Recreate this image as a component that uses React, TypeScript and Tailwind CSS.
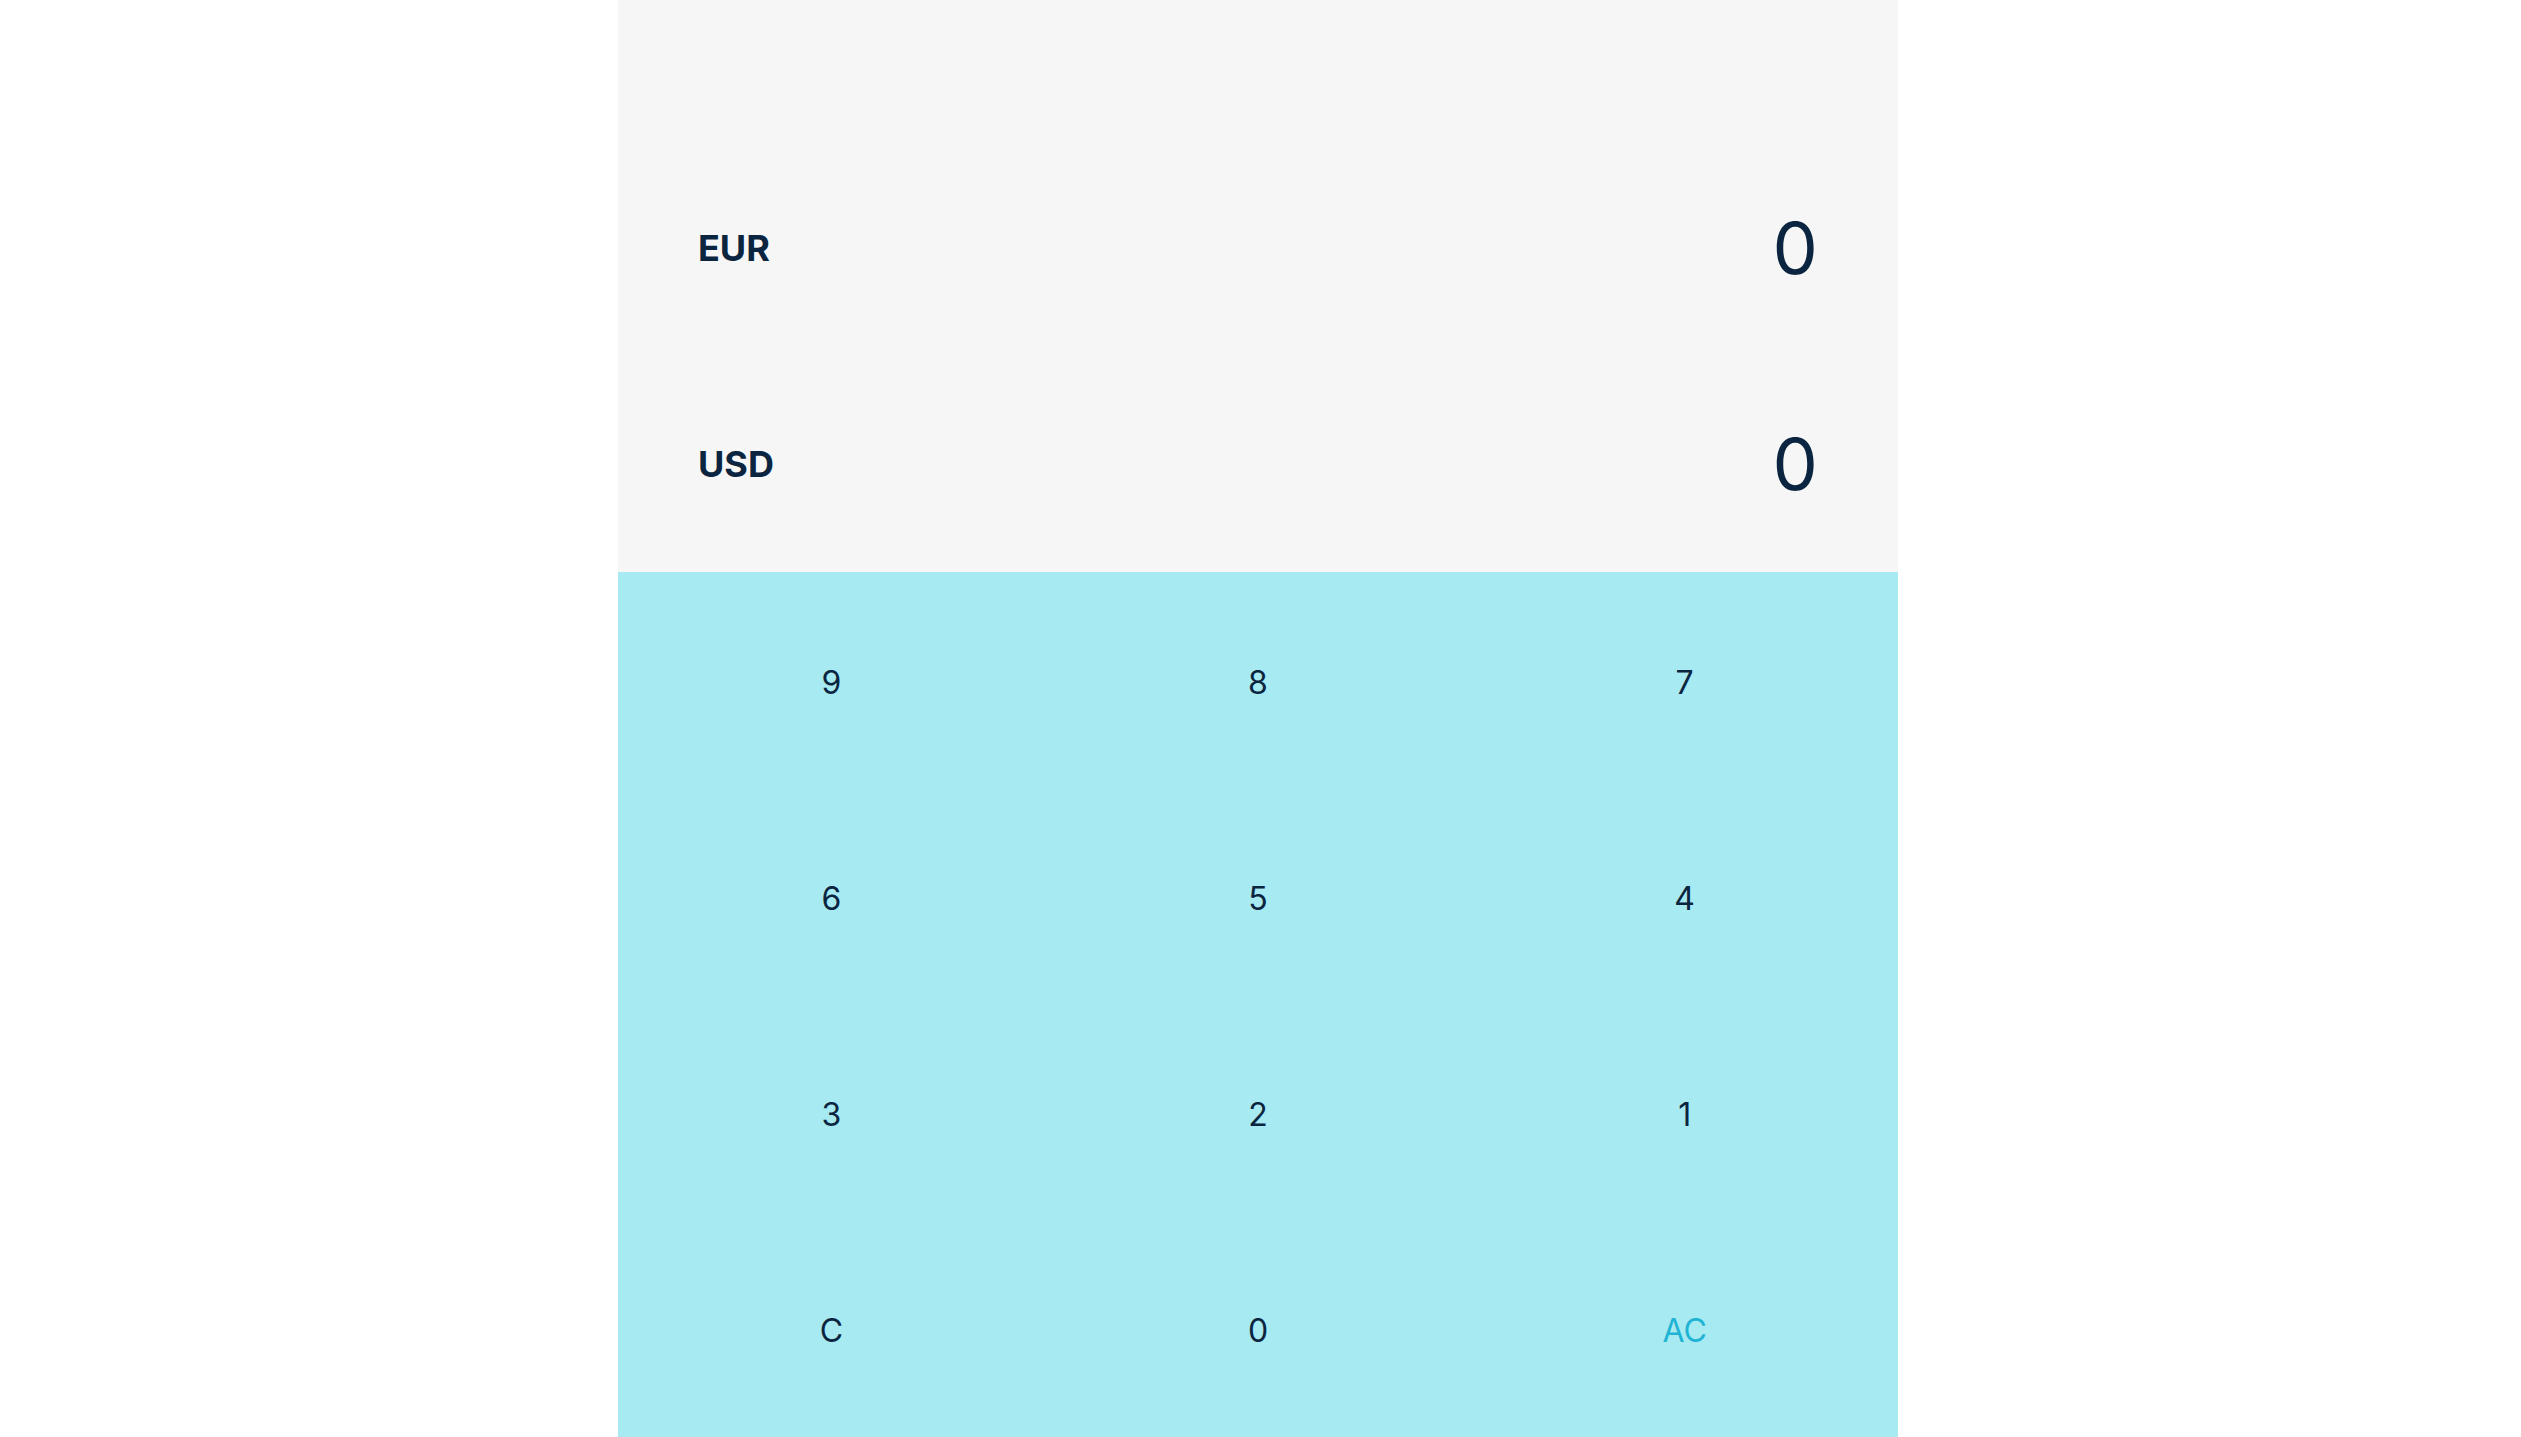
import React from 'react';

const keys = ['9', '8', '7', '6', '5', '4', '3', '2', '1', 'C', '0', 'AC'];

export default function App() {
  return (
    <div className="min-h-screen w-full bg-white pr-[5px]" style={{ fontFamily: 'Inter, "Noto Sans", sans-serif' }}>
      <div className="mx-auto flex h-[1437px] w-[1280px] flex-col">
        <div className="flex h-[572px] flex-col bg-[#f6f6f6] px-[80px] pt-[140px]">
          <div className="flex h-[216px] items-center justify-between">
            <span className="text-[36px] font-bold text-[#0b2540]">EUR</span>
            <span className="text-[72px] font-normal text-[#0b2540]">0</span>
          </div>
          <div className="flex h-[216px] items-center justify-between">
            <span className="text-[36px] font-bold text-[#0b2540]">USD</span>
            <span className="text-[72px] font-normal text-[#0b2540]">0</span>
          </div>
        </div>
        <div className="grid flex-1 grid-cols-3 grid-rows-4 bg-[#a7eaf2]">
          {keys.map((k) => (
            <div
              key={k}
              className={
                k === 'AC'
                  ? 'flex items-center justify-center pt-[5px] text-[32px] text-[#1fb3d4]'
                  : 'flex items-center justify-center pt-[5px] text-[32px] text-[#0b2540]'
              }
            >
              {k}
            </div>
          ))}
        </div>
      </div>
    </div>
  );
}
